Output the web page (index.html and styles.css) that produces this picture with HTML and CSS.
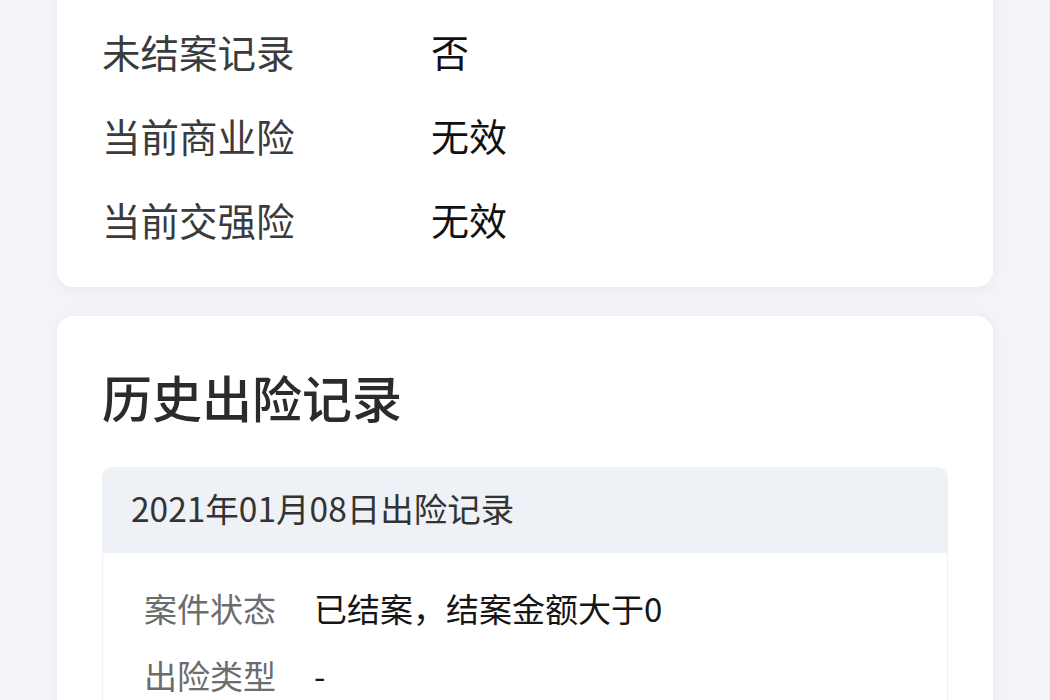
FILE: index.html
```html
<!DOCTYPE html>
<html lang="zh-CN">
<head>
<meta charset="utf-8">
<title>出险记录</title>
<link rel="stylesheet" href="styles.css">
</head>
<body>
<div class="page">
  <section class="card card-top">
    <div class="kv"><span class="k">未结案记录</span><span class="v">否</span></div>
    <div class="kv"><span class="k">当前商业险</span><span class="v">无效</span></div>
    <div class="kv"><span class="k">当前交强险</span><span class="v">无效</span></div>
  </section>
  <section class="card card-history">
    <h2 class="title">历史出险记录</h2>
    <div class="record">
      <div class="record-head">2021年01月08日出险记录</div>
      <div class="record-body">
        <div class="row"><span class="rk">案件状态</span><span class="rv">已结案，结案金额大于0</span></div>
        <div class="row"><span class="rk">出险类型</span><span class="rv">-</span></div>
      </div>
    </div>
  </section>
</div>
</body>
</html>
```
FILE: styles.css
```css
html, body {
  margin: 0;
  padding: 0;
  background: #f3f4f7;
  font-family: "Noto Sans CJK SC", "Noto Sans", sans-serif;
  overflow: hidden;
}
.page {
  width: 936px;
  margin: 0 0 0 57px;
  display: flex;
  flex-direction: column;
  gap: 29px;
}
.card {
  background: #ffffff;
  border-radius: 16px;
  box-shadow: 0 2px 10px rgba(200, 205, 215, 0.25);
}
.card-top {
  margin-top: -20px;
  padding: 29px 45px 26px;
  border-radius: 0 0 16px 16px;
}
.kv {
  display: flex;
  align-items: center;
  height: 84px;
  line-height: 84px;
  font-size: 38.5px;
}
.k {
  width: 329px;
  color: #3a3b3d;
}
.v {
  color: #111111;
  font-size: 38px;
}
.card-history {
  padding: 42px 45px 40px;
}
.title {
  margin: 0;
  font-size: 50px;
  font-weight: 500;
  color: #2a2b2d;
  line-height: 76px;
}
.record {
  margin-top: 33px;
  border-radius: 10px;
  overflow: hidden;
  border: 1px solid #f0f1f4;
}
.record-head {
  background: #eef1f6;
  height: 85px;
  box-sizing: border-box;
  padding: 0 0 6px 28px;
  display: flex;
  align-items: center;
  font-size: 33.5px;
  line-height: 40px;
  color: #333333;
}
.record-body {
  padding: 22px 0 0 41px;
}
.row {
  display: flex;
  align-items: center;
  height: 67px;
  line-height: 67px;
  font-size: 33px;
}
.rk {
  width: 170px;
  color: #6b6c6e;
}
.rv {
  color: #161616;
}
```
